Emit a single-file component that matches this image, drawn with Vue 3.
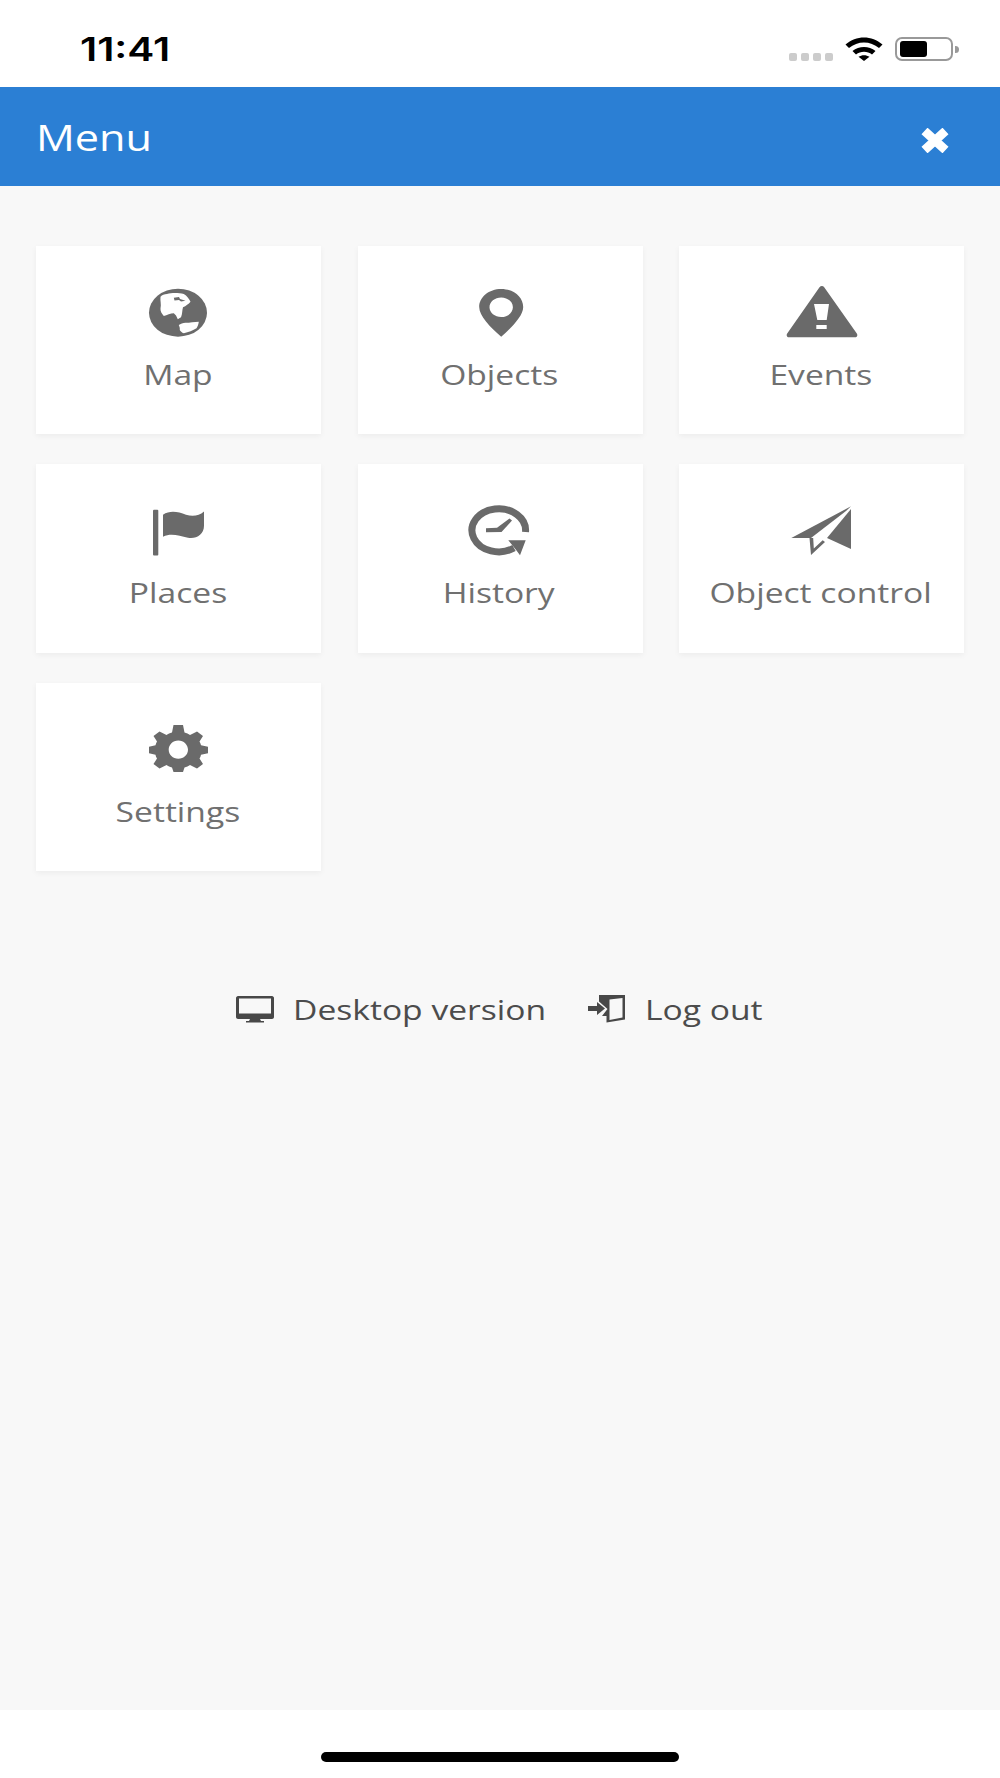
<script setup>
const items = [
  { key: "map", label: "Map" },
  { key: "objects", label: "Objects" },
  { key: "events", label: "Events" },
  { key: "places", label: "Places" },
  { key: "history", label: "History" },
  { key: "control", label: "Object control" },
  { key: "settings", label: "Settings" },
];
</script>

<template>
  <div class="app">
    <div class="status">
      <span class="time">11:41</span>
      <div class="status-right">
        <div class="signal"><i></i><i></i><i></i><i></i></div>
        <svg class="wifi" width="38" height="24" viewBox="0 0 38 24">
          <path d="M0.5 7.5C11 -2 27 -2 37.5 7.5L34 11C25.500 3.500 12.500 3.500 4 11Z" />
          <path d="M7.500 14C14 8.500 24 8.500 30.500 14L27 17.500C22.500 13.800 15.500 13.800 11 17.500Z" />
          <path d="M19 24L13.500 19.800C16.800 17.600 21.200 17.600 24.500 19.800Z" />
        </svg>
        <div class="battery"><div class="battery-fill"></div></div>
        <div class="battery-nub"></div>
      </div>
    </div>

    <header class="header">
      <span class="title">Menu</span>
      <svg class="close" width="28" height="25" viewBox="0 0 28 25">
        <path d="M3.500 3L24.500 22M24.500 3L3.500 22" />
      </svg>
    </header>

    <main class="main">
      <div class="grid">
        <div v-for="item in items" :key="item.key" class="card">
          <svg class="icon" width="72" height="54" viewBox="0 0 72 54">
            <template v-if="item.key === 'map'">
              <ellipse cx="35" cy="26.700" rx="29" ry="24" />
              <path class="cut" d="M17.500 10.700C19 9 21.500 8 24 8C29 6.500 36 6.800 40.800 8C44 10 46 12.500 47.500 15.700C45.500 18 43 19.800 40 21.300C39 24.500 39.500 28 38 31.300L34.800 33.300L33 29.500L30.800 27.300C27.500 27.500 24 29 20.800 30C18.500 27.500 17.200 25 17.500 22.300C18.500 18.500 17 14.500 17.500 10.700Z" />
              <path class="cut" d="M35.800 39C37.500 37.800 40 37 42.500 36.700C47 36.700 51.500 36 55.800 35.700C55.500 38 54.800 40.300 53.500 42.300C50 44.500 45.500 46.200 40.800 47.300C38.800 46.500 37.500 45.300 36.800 44C37 42 36.500 40.500 35.800 39Z" />
              <path d="M30.800 11.800L36 11L37 13L42.500 14.700L38 15.500L36 14L31.500 14.500Z" />
            </template>
            <path
              v-else-if="item.key === 'objects'"
              fill-rule="evenodd"
              d="M37.200 3C49.500 3 59.200 11 59.200 21C59.200 30 48 41 37.200 50.700C26 41 15.200 30 15.200 21C15.200 11 25 3 37.200 3ZM37.200 11.500C30.800 11.500 25.500 15.800 25.500 21.200C25.500 26.600 30.800 31 37.200 31C43.600 31 48.900 26.600 48.900 21.200C48.900 15.800 43.600 11.500 37.200 11.500Z"
            />
            <path
              v-else-if="item.key === 'events'"
              fill-rule="evenodd"
              d="M33.500 1.200C34.800 -0.300 37 -0.300 38.200 1.200L70.800 47.500C72 49.500 71 51.300 69 51.300H3C1 51.300 0 49.500 1.200 47.500ZM28 18L31.300 34H40.700L43 18ZM30.300 39V43H40.700V39Z"
            />
            <template v-else-if="item.key === 'places'">
              <rect x="10" y="5.700" width="5.300" height="45.700" rx="1" />
              <path d="M20 10.700C27 6.200 35 7.700 43 10.700C50 12.700 56 11.700 61 7.400V21.700C61 30.700 53 35.200 45 33.700C36 31.700 28 28.700 20 32.700Z" />
            </template>
            <template v-else-if="item.key === 'history'">
              <path class="ring" d="M61.500 28A26.800 21.500 0 1 0 50 44" />
              <path d="M44.300 36.300H61.700L56 51.300L52.500 46.500Z" />
              <path d="M22 24.300L33 23.800L45.500 14.500L48 16.500L37.500 28L22 28.300Z" />
            </template>
            <template v-else-if="item.key === 'control'">
              <path d="M65 2.300L5.300 34H25L60 7Z" />
              <path d="M65 5L41 34L65 45Z" />
              <path d="M23.500 34L25 51L39 38L36.700 36.300L27.800 44.500L27.200 34Z" />
            </template>
            <path
              v-else
              fill-rule="evenodd"
              d="M30.500 2H40L41.500 9.500C43.500 10 45.500 11 47 12L54 8.500L60 13L56.500 18.500C57.300 19.800 57.800 21 58 22.300L65 23.700V30.300L58 31.700C57.800 33 57.300 34.200 56.500 35.500L60 41L54 45.500L47 42C45.500 43 43.500 44 41.500 44.500L40 49H30.500L29 44.500C27 44 25 43 23.500 42L16.500 45.500L10.500 41L14 35.500C13.200 34.200 12.700 33 12.500 31.700L6 30.300V23.700L12.500 22.300C12.700 21 13.200 19.800 14 18.500L10.500 13L16.500 8.500L23.500 12C25 11 27 10 29 9.500ZM35.300 17.500C29.800 17.500 25.700 21.800 25.700 26.700C25.700 31.500 29.800 35.700 35.300 35.700C40.800 35.700 45 31.500 45 26.700C45 21.800 40.800 17.500 35.300 17.500Z"
            />
          </svg>
          <span class="label">{{ item.label }}</span>
        </div>
      </div>

      <div class="links">
        <div class="link">
          <svg width="38" height="28" viewBox="0 0 38 28">
            <path fill-rule="evenodd" d="M2 1H36C37 1 38 2 38 3V22C38 23 37 24 36 24H24L25 26H28V27.500H10V26H13L14 24H2C1 24 0 23 0 22V3C0 2 1 1 2 1ZM3 3.500V18.500H35V3.500Z" />
          </svg>
          <span class="link-text">Desktop version</span>
        </div>
        <div class="link link-out">
          <svg width="38" height="28" viewBox="0 0 38 28">
            <path d="M0 11H9V7L17 13.500L9 20V16H0Z" />
            <path fill-rule="evenodd" d="M11 0H37V24.500L18.500 27.500V21H14L19.500 14L11 6.500ZM21.500 4.500V25L34.500 22.500V3Z" />
          </svg>
          <span class="link-text link-text-out">Log out</span>
        </div>
      </div>
    </main>

    <footer class="home">
      <div class="home-bar"></div>
    </footer>
  </div>
</template>

<style>
body {
  background: #fff;
}
</style>

<style scoped>
.app {
  height: 1778px;
  display: flex;
  flex-direction: column;
  font-family: "Open Sans", sans-serif;
  background: #fff;
}

.status {
  height: 87px;
  flex-shrink: 0;
  display: flex;
  justify-content: space-between;
  padding: 0 41px 0 80px;
  box-sizing: border-box;
}

.time {
  margin-top: 30px;
  font-family: Inter, sans-serif;
  font-size: 32px;
  line-height: 40px;
  font-weight: 600;
  color: #000;
  display: inline-block;
  transform: scaleX(1.27);
  transform-origin: left;
}

.status-right {
  display: flex;
  align-items: flex-start;
  padding-top: 37px;
}

.signal {
  display: flex;
  gap: 4px;
  margin: 16px 12px 0 0;
}

.signal i {
  width: 8px;
  height: 8px;
  border-radius: 2px;
  background: #ccc;
}

.battery {
  width: 58px;
  height: 24px;
  margin-left: 12px;
  border: 2px solid #999;
  border-radius: 7px;
  box-sizing: border-box;
  padding: 2px 3px;
}

.battery-fill {
  width: 27px;
  height: 16px;
  background: #000;
  border-radius: 3px;
}

.battery-nub {
  width: 4px;
  height: 7px;
  margin: 9px 0 0 2px;
  background: #999;
  border-radius: 0 4px 4px 0;
}

.header {
  height: 99px;
  flex-shrink: 0;
  background: #2b7fd4;
  display: flex;
  align-items: center;
  justify-content: space-between;
  padding: 0 51px 0 37px;
  color: #fff;
}

.title {
  margin: 3px 0 0 -1px;
  font-size: 36px;
  line-height: 50px;
  display: inline-block;
  transform: scaleX(1.2);
  transform-origin: left;
}

.close {
  margin-top: 7px;
}

.close path {
  fill: none;
  stroke: #fff;
  stroke-width: 9;
  stroke-linecap: butt;
}

.main {
  flex: 1;
  background: #f8f8f8;
  padding: 60px 36px 0;
}

.grid {
  display: grid;
  grid-template-columns: repeat(3, 285px);
  grid-auto-rows: 188.300px;
  justify-content: space-between;
  row-gap: 30px;
}

.card {
  background: #fff;
  box-shadow: 0 2px 6px rgba(0, 0, 0, 0.05);
  display: flex;
  flex-direction: column;
  align-items: center;
  padding-top: 40px;
  box-sizing: border-box;
}

.icon {
  display: block;
  fill: #6a6a6a;
}

.icon .cut {
  fill: #fff;
}

.icon .ring {
  fill: none;
  stroke: #6a6a6a;
  stroke-width: 7;
}

.label {
  margin: 15px 2px 0 0;
  font-size: 28px;
  line-height: 38px;
  color: #707070;
  white-space: nowrap;
  display: inline-block;
  transform: scaleX(1.2);
}

.links {
  display: flex;
  justify-content: center;
  margin: 118px 0 0 -3px;
}

.link {
  display: flex;
  align-items: center;
  height: 40px;
}

.link svg {
  fill: #484848;
  flex-shrink: 0;
}

.link-out {
  margin-left: 84px;
}

.link-text {
  margin-left: 19px;
  font-size: 28px;
  line-height: 40px;
  color: #4c4c4c;
  white-space: nowrap;
  display: inline-block;
  transform: scaleX(1.2);
  transform-origin: left;
}

.link-text-out {
  margin-right: 18px;
}

.home {
  height: 68px;
  flex-shrink: 0;
  background: #fff;
  display: flex;
  justify-content: center;
}

.home-bar {
  width: 358px;
  height: 10px;
  margin-top: 42px;
  background: #000;
  border-radius: 5px;
}
</style>
